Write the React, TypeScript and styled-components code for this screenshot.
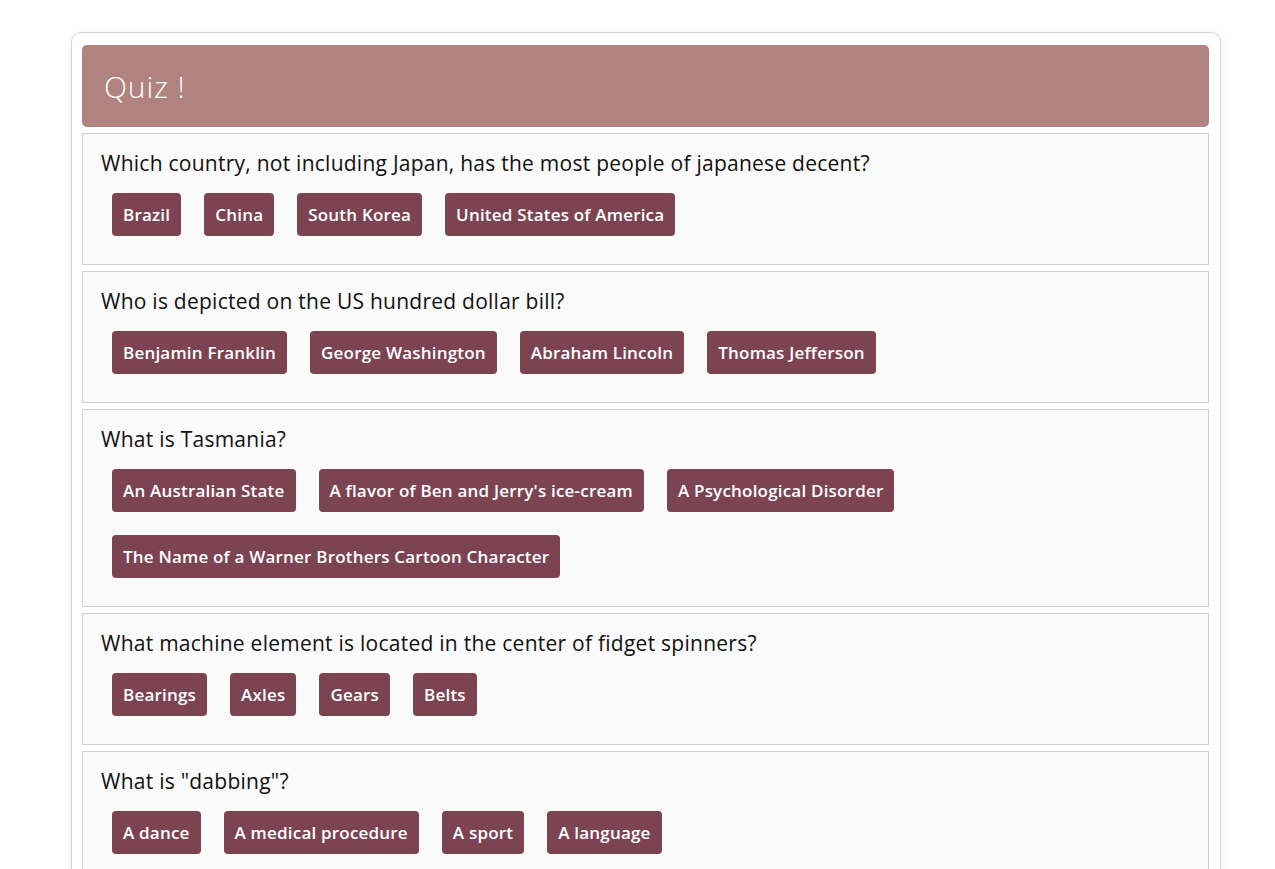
import { JSX } from "react";
import styled, { createGlobalStyle } from "styled-components";

const GlobalStyle = createGlobalStyle`
  body {
    margin: 0;
    background: #ffffff;
    font-family: "Open Sans", "Lato", sans-serif;
  }
`;

const Page = styled.div`
  padding: 32px 0 0 71px;
`;

const QuizCard = styled.div`
  width: 1150px;
  box-sizing: border-box;
  padding: 12px 11px 12px 10px;
  border: 1px solid #d6d6d6;
  border-radius: 10px;
  background: #ffffff;
  box-shadow: 0 0 8px rgba(0, 0, 0, 0.06);
  display: flex;
  flex-direction: column;
  gap: 6px;
`;

const Header = styled.div`
  height: 82px;
  display: flex;
  align-items: center;
  padding: 0 22px;
  border-radius: 5px;
  background: #b08280;
  color: #ffffff;
  font-size: 30px;
  font-weight: 300;
  letter-spacing: 0.9px;
`;

const QuestionCard = styled.div`
  border: 1px solid #cfcfcf;
  background: #fafafa;
  padding: 15px 18px 17px;
`;

const QuestionText = styled.div`
  font-size: 21px;
  line-height: 28px;
  color: #111111;
  letter-spacing: 0.25px;
  margin-bottom: 5px;
`;

const Answers = styled.div`
  display: flex;
  flex-wrap: wrap;
  gap: 23px;
  padding: 11px;
`;

const AnswerButton = styled.button`
  padding: 10px 11px;
  border: none;
  border-radius: 4px;
  background: #7c4452;
  color: #ffffff;
  font-family: "Open Sans", "Lato", sans-serif;
  font-size: 17px;
  font-weight: 600;
  line-height: 23px;
  letter-spacing: 0.2px;
  cursor: pointer;
`;

const questions: { text: string; answers: string[] }[] = [
  {
    text: "Which country, not including Japan, has the most people of japanese decent?",
    answers: ["Brazil", "China", "South Korea", "United States of America"],
  },
  {
    text: "Who is depicted on the US hundred dollar bill?",
    answers: ["Benjamin Franklin", "George Washington", "Abraham Lincoln", "Thomas Jefferson"],
  },
  {
    text: "What is Tasmania?",
    answers: [
      "An Australian State",
      "A flavor of Ben and Jerry's ice-cream",
      "A Psychological Disorder",
      "The Name of a Warner Brothers Cartoon Character",
    ],
  },
  {
    text: "What machine element is located in the center of fidget spinners?",
    answers: ["Bearings", "Axles", "Gears", "Belts"],
  },
  {
    text: 'What is "dabbing"?',
    answers: ["A dance", "A medical procedure", "A sport", "A language"],
  },
];

export default function App(): JSX.Element {
  return (
    <Page>
      <GlobalStyle />
      <QuizCard>
        <Header>Quiz !</Header>
        {questions.map((q) => (
          <QuestionCard key={q.text}>
            <QuestionText>{q.text}</QuestionText>
            <Answers>
              {q.answers.map((a) => (
                <AnswerButton key={a}>{a}</AnswerButton>
              ))}
            </Answers>
          </QuestionCard>
        ))}
      </QuizCard>
    </Page>
  );
}
